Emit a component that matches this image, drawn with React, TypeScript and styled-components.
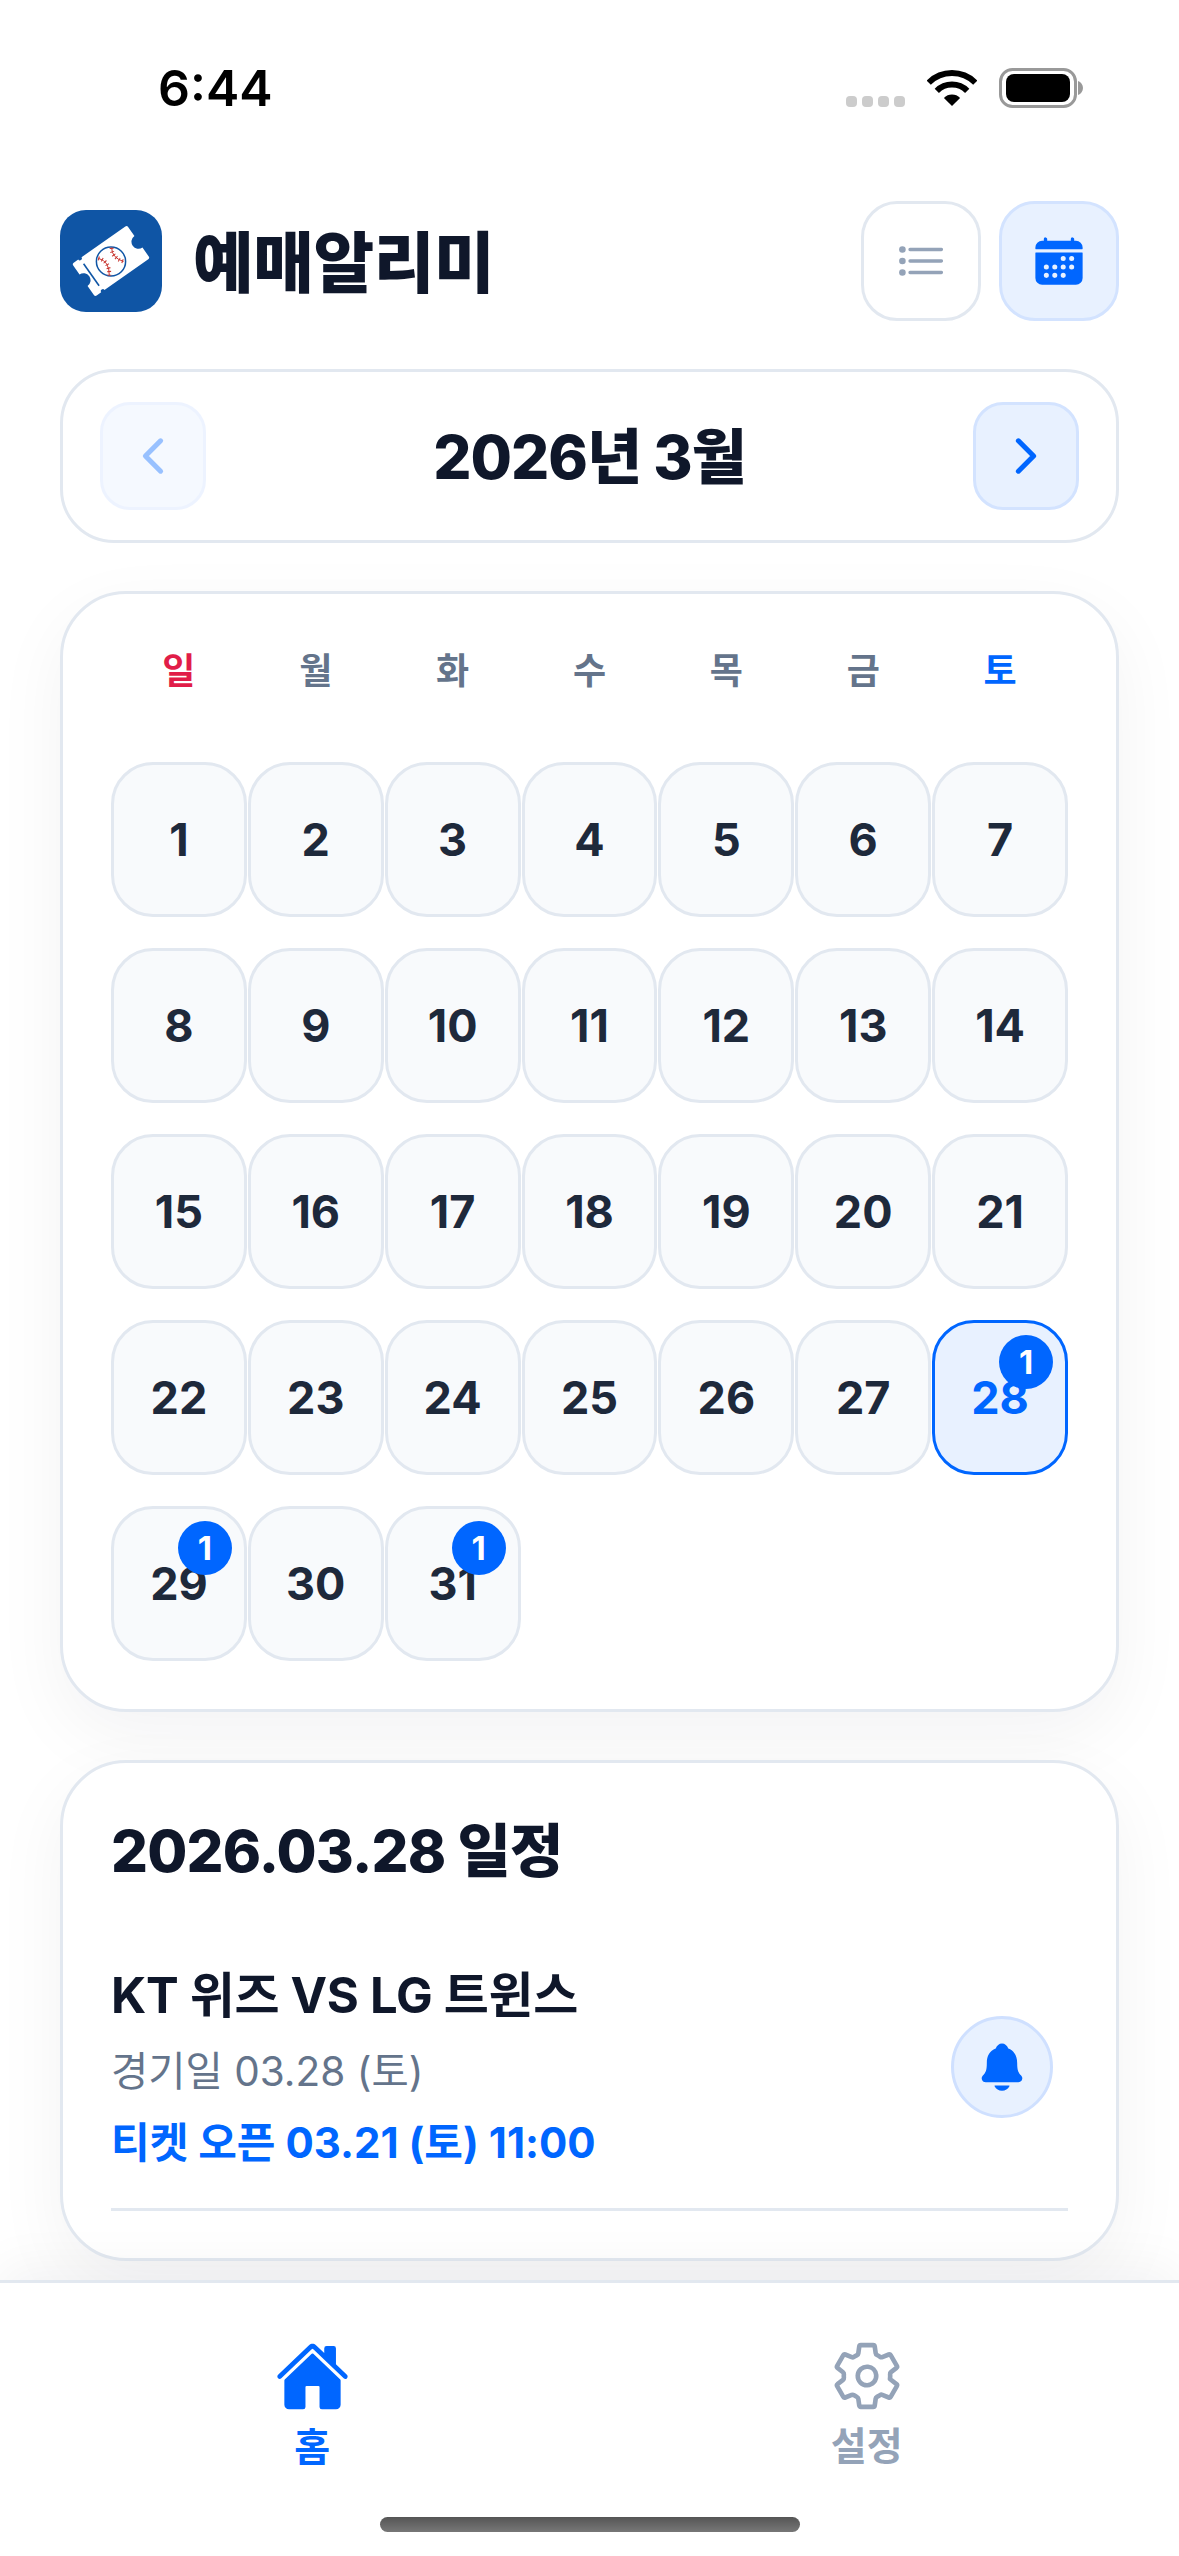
import React from "react";
import styled, { createGlobalStyle } from "styled-components";
import {
  IoCalendar,
  IoChevronBack,
  IoChevronForward,
  IoHome,
  IoNotifications,
  IoSettingsOutline,
} from "react-icons/io5";

const BLUE = "#0066ff";
const INK = "#0f172a";
const LINE = "#e2e8f0";

const GlobalStyle = createGlobalStyle`
  html, body {
    margin: 0;
    padding: 0;
    background: #ffffff;
  }
  * {
    box-sizing: border-box;
  }
  body {
    font-family: Inter, "Noto Sans CJK KR", sans-serif;
  }
`;

const Page = styled.div`
  position: relative;
  display: flex;
  flex-direction: column;
  width: 1179px;
  height: 2556px;
  overflow: hidden;
  background: #ffffff;
`;

const StatusBar = styled.div`
  display: flex;
  align-items: center;
  justify-content: space-between;
  flex: none;
  height: 176px;
  padding: 0 96px 0 158px;
`;

const Clock = styled.span`
  font-size: 50px;
  font-weight: 600;
  color: #000000;
`;

const StatusIcons = styled.div`
  display: flex;
  align-items: center;
  gap: 22px;
`;

const SignalDots = styled.svg`
  margin-top: 26px;
`;

const Main = styled.main`
  display: flex;
  flex: 1;
  flex-direction: column;
  gap: 48px;
  padding: 25px 60px 0;
`;

const Header = styled.header`
  display: flex;
  align-items: center;
  justify-content: space-between;
`;

const Brand = styled.div`
  display: flex;
  align-items: center;
  gap: 31px;
`;

const AppTitle = styled.h1`
  margin: 0 0 6px;
  font-size: 66px;
  font-weight: 800;
  letter-spacing: -0.5px;
  color: ${INK};
`;

const HeaderActions = styled.div`
  display: flex;
  gap: 18px;
`;

const ViewButton = styled.button<{ $active?: boolean }>`
  display: flex;
  align-items: center;
  justify-content: center;
  width: 120px;
  height: 120px;
  padding: 0;
  border: 3px solid ${(p) => (p.$active ? "#d3e3ff" : LINE)};
  border-radius: 36px;
  background: ${(p) => (p.$active ? "#e8f1ff" : "#ffffff")};
  color: ${(p) => (p.$active ? BLUE : "#94a3b8")};
`;

const MonthCard = styled.section`
  display: flex;
  align-items: center;
  justify-content: space-between;
  height: 174px;
  padding: 0 37px;
  border: 3px solid ${LINE};
  border-radius: 54px;
  background: #ffffff;
`;

const MonthTitle = styled.h2`
  margin: 0 0 7px;
  font-size: 60px;
  font-weight: 800;
  letter-spacing: -1px;
  color: ${INK};
`;

const MonthButton = styled.button<{ $disabled?: boolean }>`
  display: flex;
  align-items: center;
  justify-content: center;
  width: 106px;
  height: 108px;
  padding: 0;
  border: 3px solid #d3e3ff;
  border-radius: 30px;
  background: #e8f1ff;
  color: ${BLUE};
  opacity: ${(p) => (p.$disabled ? 0.4 : 1)};
`;

const Card = styled.section`
  border: 3px solid ${LINE};
  border-radius: 66px;
  background: #ffffff;
  box-shadow: 0 24px 72px rgba(15, 23, 42, 0.05);
`;

const CalendarCard = styled(Card)`
  height: 1121px;
  padding: 48px;
`;

const WeekRow = styled.div`
  display: grid;
  grid-template-columns: repeat(7, 1fr);
  column-gap: 1px;
  height: 50px;
  margin-bottom: 70px;
`;

const WeekDay = styled.span<{ $color: string }>`
  display: flex;
  align-items: center;
  justify-content: center;
  font-size: 36px;
  font-weight: 700;
  color: ${(p) => p.$color};
`;

const DayGrid = styled.div`
  display: grid;
  grid-template-columns: repeat(7, 1fr);
  grid-auto-rows: 155px;
  column-gap: 1px;
  row-gap: 31px;
`;

const DayCell = styled.div<{ $selected?: boolean }>`
  position: relative;
  display: flex;
  align-items: center;
  justify-content: center;
  border: 3px solid ${(p) => (p.$selected ? BLUE : LINE)};
  border-radius: 42px;
  background: ${(p) => (p.$selected ? "#e8f1ff" : "#f8fafc")};
  font-size: 45px;
  font-weight: 700;
  color: ${(p) => (p.$selected ? BLUE : "#1e293b")};
`;

const CountBadge = styled.span`
  position: absolute;
  top: 12px;
  right: 12px;
  display: flex;
  align-items: center;
  justify-content: center;
  width: 54px;
  height: 54px;
  border-radius: 50%;
  background: ${BLUE};
  font-size: 33px;
  font-weight: 700;
  color: #ffffff;
`;

const ScheduleCard = styled(Card)`
  height: 501px;
  padding: 49px 48px 0;
`;

const ScheduleTitle = styled.h2`
  margin: 0 0 36px;
  font-size: 58px;
  line-height: 78px;
  font-weight: 800;
  letter-spacing: -0.8px;
  color: ${INK};
`;

const GameRow = styled.div`
  display: flex;
  align-items: center;
  justify-content: space-between;
  height: 285px;
  padding-right: 15px;
  border-bottom: 3px solid ${LINE};
`;

const GameInfo = styled.div`
  display: flex;
  flex-direction: column;
  padding-top: 3px;
`;

const GameName = styled.div`
  margin-bottom: 16px;
  font-size: 49px;
  line-height: 62px;
  font-weight: 700;
  letter-spacing: -0.3px;
  color: ${INK};
`;

const GameDate = styled.div`
  margin-bottom: 13px;
  font-size: 40.5px;
  line-height: 58px;
  color: #64748b;
`;

const TicketOpen = styled.div`
  font-size: 42px;
  line-height: 58px;
  font-weight: 700;
  color: ${BLUE};
`;

const BellButton = styled.button`
  display: flex;
  align-items: center;
  justify-content: center;
  width: 102px;
  height: 102px;
  padding: 0;
  border: 3px solid #cfe0ff;
  border-radius: 50%;
  background: #e8f1ff;
  color: ${BLUE};
`;

const TabBar = styled.nav`
  display: grid;
  grid-template-columns: 1fr 1fr;
  flex: none;
  height: 276px;
  padding: 56px 35px 0;
  border-top: 3px solid ${LINE};
  background: #ffffff;
  box-shadow: 0 -12px 48px rgba(15, 23, 42, 0.05);
`;

const Tab = styled.div<{ $active?: boolean }>`
  display: flex;
  flex-direction: column;
  align-items: center;
  height: 120px;
  color: ${(p) => (p.$active ? BLUE : "#94a3b8")};
`;

const TabIcon = styled.div`
  display: flex;
  align-items: center;
  justify-content: center;
  height: 78px;
`;

const TabLabel = styled.span`
  margin-top: 8px;
  font-size: 39px;
  line-height: 50px;
  font-weight: 700;
`;

const HomeIndicator = styled.div`
  position: absolute;
  left: 380px;
  bottom: 24px;
  width: 420px;
  height: 15px;
  border-radius: 8px;
  background: linear-gradient(#555555, #777777);
`;

const WEEK = [
  { label: "일", color: "#e11d48" },
  { label: "월", color: "#64748b" },
  { label: "화", color: "#64748b" },
  { label: "수", color: "#64748b" },
  { label: "목", color: "#64748b" },
  { label: "금", color: "#64748b" },
  { label: "토", color: BLUE },
];

const DAYS = Array.from({ length: 31 }, (_, i) => i + 1);
const GAME_DAYS = [28, 29, 31];
const SELECTED_DAY = 28;

// ticket with a baseball on it, turned like the app icon
const AppLogo = () => (
  <svg width="102" height="102" viewBox="0 0 102 102">
    <rect width="102" height="102" rx="26" fill="#0f55a5" />
    <g transform="rotate(-35 51 51)">
      <path
        d="M19.5 31 H25 A2 2 0 0 0 29 31 H82.5 A2 2 0 0 1 84.5 33 V44 A7 7 0 0 0 84.5 58 V69 A2 2 0 0 1 82.5 71 H29 A2 2 0 0 0 25 71 H19.5 A2 2 0 0 1 17.5 69 V58 A7 7 0 0 0 17.5 44 V33 A2 2 0 0 1 19.5 31 Z"
        fill="#ffffff"
      />
      <line x1="27" y1="37.5" x2="27" y2="64.5" stroke="#0f55a5" strokeWidth="1.6" />
    </g>
    <circle cx="51" cy="51.5" r="14.6" fill="#ffffff" stroke="#0f55a5" strokeWidth="1.5" />
    <g fill="none" stroke="#c8352f">
      <path d="M51.7 37.8 Q51.5 47.5 63.5 51.5" strokeWidth="1" />
      <path d="M38.3 48.3 Q49.5 51 49.3 65.5" strokeWidth="1" />
      <path d="M51.7 37.8 Q51.5 47.5 63.5 51.5" strokeWidth="4" strokeDasharray="1 2.6" />
      <path d="M38.3 48.3 Q49.5 51 49.3 65.5" strokeWidth="4" strokeDasharray="1 2.6" />
    </g>
  </svg>
);

const ListIcon = () => (
  <svg width="44" height="30" viewBox="0 0 44 30">
    {[3.5, 15, 26.5].map((y) => (
      <g key={y}>
        <circle cx="3.4" cy={y} r="3.3" fill="currentColor" />
        <line x1="11" y1={y} x2="42.4" y2={y} stroke="currentColor" strokeWidth="3.3" strokeLinecap="round" />
      </g>
    ))}
  </svg>
);

const WifiIcon = () => (
  <svg width="50" height="37" viewBox="0 0 50 37">
    <g fill="none" stroke="#000000" strokeWidth="6">
      <path d="M1.7 12.7 A33 33 0 0 1 48.3 12.7" />
      <path d="M9.8 20.8 A21.5 21.5 0 0 1 40.2 20.8" />
    </g>
    <path d="M25 36 L16.9 27.9 A11.5 11.5 0 0 1 33.1 27.9 Z" fill="#000000" />
  </svg>
);

const BatteryIcon = () => (
  <svg width="84" height="40" viewBox="0 0 84 40">
    <rect x="1.5" y="1.5" width="75" height="37" rx="12" fill="none" stroke="#999999" strokeWidth="3" />
    <rect x="7" y="6" width="64" height="28" rx="8" fill="#000000" />
    <path d="M79 13 C82 14 84 17 84 20 C84 23 82 26 79 27 Z" fill="#999999" />
  </svg>
);

export default function App() {
  return (
    <Page>
      <GlobalStyle />
      <StatusBar>
        <Clock>6:44</Clock>
        <StatusIcons>
          <SignalDots width="59" height="11" viewBox="0 0 59 11">
            {[0, 16, 32, 48].map((x) => (
              <rect key={x} x={x} y="0" width="11" height="11" rx="4" fill="#cccccc" />
            ))}
          </SignalDots>
          <WifiIcon />
          <BatteryIcon />
        </StatusIcons>
      </StatusBar>

      <Main>
        <Header>
          <Brand>
            <AppLogo />
            <AppTitle>예매알리미</AppTitle>
          </Brand>
          <HeaderActions>
            <ViewButton>
              <ListIcon />
            </ViewButton>
            <ViewButton $active>
              <IoCalendar size={54} />
            </ViewButton>
          </HeaderActions>
        </Header>

        <MonthCard>
          <MonthButton $disabled>
            <IoChevronBack size={54} />
          </MonthButton>
          <MonthTitle>2026년 3월</MonthTitle>
          <MonthButton>
            <IoChevronForward size={54} />
          </MonthButton>
        </MonthCard>

        <CalendarCard>
          <WeekRow>
            {WEEK.map((d) => (
              <WeekDay key={d.label} $color={d.color}>
                {d.label}
              </WeekDay>
            ))}
          </WeekRow>
          <DayGrid>
            {DAYS.map((day) => (
              <DayCell key={day} $selected={day === SELECTED_DAY}>
                {day}
                {GAME_DAYS.includes(day) && <CountBadge>1</CountBadge>}
              </DayCell>
            ))}
          </DayGrid>
        </CalendarCard>

        <ScheduleCard>
          <ScheduleTitle>2026.03.28 일정</ScheduleTitle>
          <GameRow>
            <GameInfo>
              <GameName>KT 위즈 VS LG 트윈스</GameName>
              <GameDate>경기일 03.28 (토)</GameDate>
              <TicketOpen>티켓 오픈 03.21 (토) 11:00</TicketOpen>
            </GameInfo>
            <BellButton>
              <IoNotifications size={54} />
            </BellButton>
          </GameRow>
        </ScheduleCard>
      </Main>

      <TabBar>
        <Tab $active>
          <TabIcon>
            <IoHome size={75} />
          </TabIcon>
          <TabLabel>홈</TabLabel>
        </Tab>
        <Tab>
          <TabIcon>
            <IoSettingsOutline size={74} />
          </TabIcon>
          <TabLabel>설정</TabLabel>
        </Tab>
      </TabBar>
      <HomeIndicator />
    </Page>
  );
}
